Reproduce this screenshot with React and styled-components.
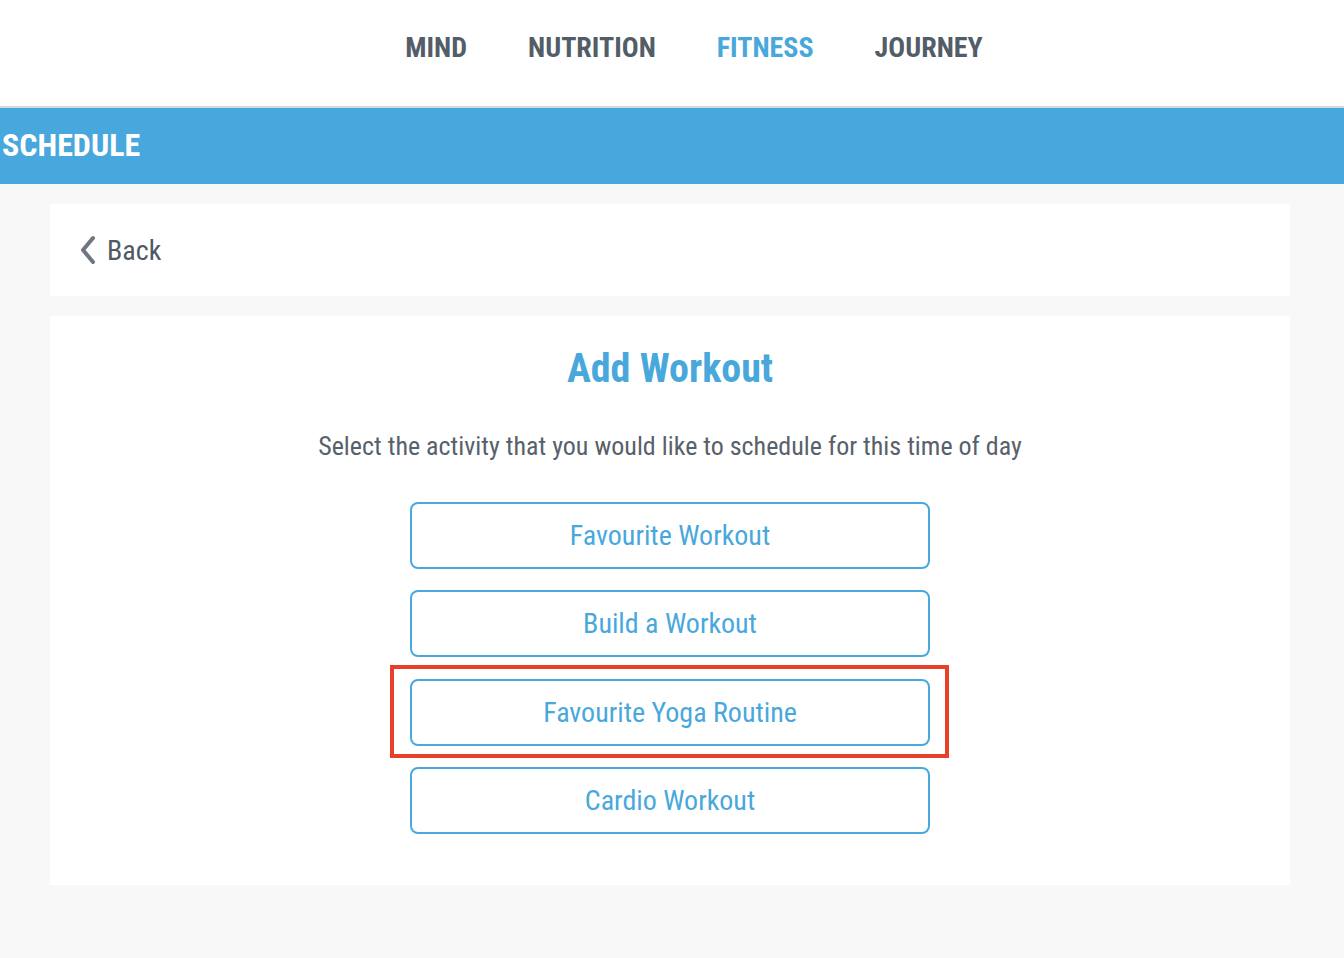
import styled, { createGlobalStyle } from 'styled-components';

const GlobalStyle = createGlobalStyle`
  html, body {
    margin: 0;
    padding: 0;
    background: #f8f8f8;
    font-family: "Roboto Condensed", "Roboto", "Liberation Sans", sans-serif;
    font-stretch: condensed;
  }
`

const Page = styled.div`
  min-height: 958px;
  background: #f8f8f8;
`

const TopNav = styled.nav`
  height: 106px;
  background: #fff;
  border-bottom: 2px solid #d3d8dd;
  display: flex;
  justify-content: center;
  align-items: center;
  gap: 61px;
  padding-left: 44px;
`

const NavItem = styled.a`
  font-size: 28px;
  font-weight: 700;
  color: ${props => (props.active ? '#48a8dc' : '#535d68')};
  text-decoration: none;
  margin-top: -11px;
`

const SectionBar = styled.div`
  height: 76px;
  background: #48a7dc;
  display: flex;
  align-items: center;
  padding-left: 2px;
`

const SectionTitle = styled.h1`
  margin: 0;
  font-size: 32px;
  font-weight: 700;
  color: #fff;
  margin-top: -2px;
`

const Content = styled.main`
  display: flex;
  flex-direction: column;
  gap: 20px;
  padding: 20px 54px 0 50px;
`

const Card = styled.section`
  background: #fff;
  position: relative;
`

const BackRow = styled.a`
  height: 92px;
  display: flex;
  align-items: center;
  gap: 10px;
  padding-left: 29px;
  font-size: 28px;
  color: #4f5863;
  text-decoration: none;
`

const AddBody = styled.div`
  display: flex;
  flex-direction: column;
  align-items: center;
  padding: 29px 0 51px;
`

const Heading = styled.h2`
  margin: 0;
  font-size: 40px;
  font-weight: 700;
  color: #48a8dc;
`

const Lead = styled.p`
  margin: 39px 0 41px;
  font-size: 26px;
  color: #58616b;
`

const Options = styled.div`
  display: flex;
  flex-direction: column;
  gap: 21.3px;
  position: relative;
`

const OptionButton = styled.button`
  width: 520px;
  height: 67px;
  background: #fff;
  border: 2px solid #4aa8dc;
  border-radius: 8px;
  font-family: inherit;
  font-stretch: condensed;
  font-size: 28px;
  color: #48a8dc;
  cursor: pointer;
  position: relative;
`

const Highlight = styled.span`
  position: absolute;
  left: -22px;
  right: -21px;
  top: -16px;
  bottom: -14px;
  border: 4px solid #e8402b;
  pointer-events: none;
`

const options = [
  'Favourite Workout',
  'Build a Workout',
  'Favourite Yoga Routine',
  'Cardio Workout',
];

export default function App() {
  return (
    <>
      <GlobalStyle />
      <Page>
        <TopNav>
          <NavItem href="#">MIND</NavItem>
          <NavItem href="#">NUTRITION</NavItem>
          <NavItem href="#" active>FITNESS</NavItem>
          <NavItem href="#">JOURNEY</NavItem>
        </TopNav>
        <SectionBar>
          <SectionTitle>SCHEDULE</SectionTitle>
        </SectionBar>
        <Content>
          <Card>
            <BackRow href="#">
              <svg width="18" height="30" viewBox="0 0 18 30">
                <path d="M14 3 L4 15 L14 27" fill="none" stroke="#6d7681" strokeWidth="4" strokeLinecap="round" strokeLinejoin="round" />
              </svg>
              Back
            </BackRow>
          </Card>
          <Card>
            <AddBody>
              <Heading>Add Workout</Heading>
              <Lead>Select the activity that you would like to schedule for this time of day</Lead>
              <Options>
                {options.map((label, i) => (
                  <OptionButton key={label}>
                    {label}
                    {i === 2 && <Highlight />}
                  </OptionButton>
                ))}
              </Options>
            </AddBody>
          </Card>
        </Content>
      </Page>
    </>
  )
}
